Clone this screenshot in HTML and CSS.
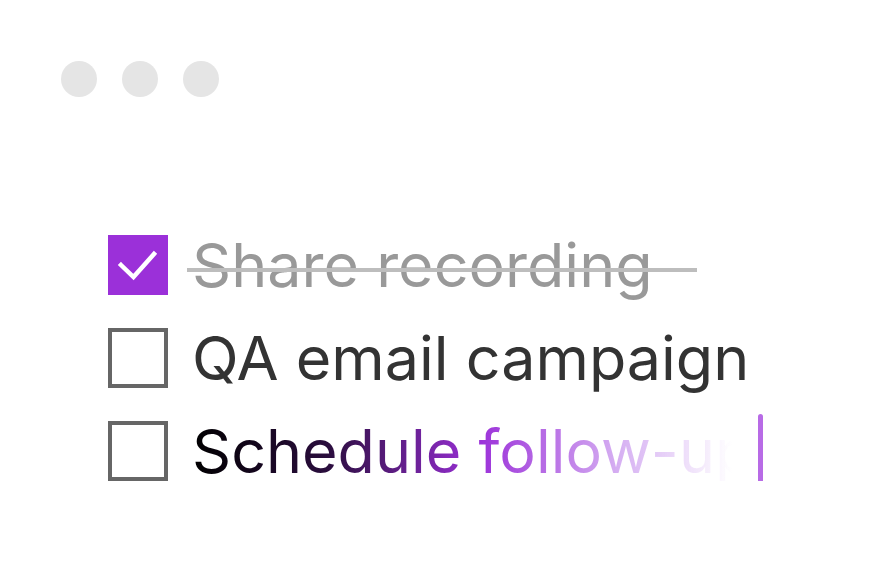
FILE: index.html
```html
<!DOCTYPE html>
<html>
<head>
<meta charset="utf-8">
<link rel="stylesheet" href="styles.css">
</head>
<body>
<div class="window">
  <div class="dots">
    <span class="dot"></span>
    <span class="dot"></span>
    <span class="dot"></span>
  </div>
  <ul class="tasks">
    <li class="task done">
      <span class="box checked">
        <svg viewBox="0 0 60 60" width="60" height="60"><path d="M13 30 L25.5 42 L46 19" fill="none" stroke="#fff" stroke-width="4.5" stroke-linecap="square"/></svg>
      </span>
      <span class="label">Share recording</span>
      <span class="strike"></span>
    </li>
    <li class="task">
      <span class="box"></span>
      <span class="label">QA email campaign</span>
    </li>
    <li class="task typing">
      <span class="box"></span>
      <span class="label fade">Schedule follow-up</span>
      <span class="cursor"></span>
    </li>
  </ul>
</div>
</body>
</html>
```
FILE: styles.css
```css
* { box-sizing: border-box; }
html, body {
  margin: 0;
  background: #fff;
}
body {
  font-family: Inter, Roboto, "Liberation Sans", sans-serif;
}
.window {
  padding: 61px 0 0 61px;
}
.dots {
  display: flex;
  gap: 25px;
}
.dot {
  width: 36px;
  height: 36px;
  border-radius: 50%;
  background: #e5e5e5;
}
.tasks {
  list-style: none;
  margin: 138px 0 0 47px;
  padding: 0;
  display: flex;
  flex-direction: column;
  gap: 33px;
}
.task {
  position: relative;
  display: flex;
  align-items: center;
  height: 60px;
  gap: 24px;
}
.box {
  flex: none;
  width: 60px;
  height: 60px;
  border: 4px solid #666;
  background: #fff;
}
.box.checked {
  border: none;
  background: #9b30d9;
}
.box svg { display: block; }
.label {
  font-size: 61px;
  line-height: 60px;
  color: #333;
  white-space: nowrap;
}
.done .label { color: #999; }
.strike {
  position: absolute;
  left: 79px;
  top: 33px;
  width: 510px;
  height: 4px;
  background: #bdbdbd;
}
.fade {
  width: 540px;
  overflow: hidden;
  background: linear-gradient(90deg, #000 0%, #2a0d3d 25%, #9b30d9 53%, rgba(190,130,235,0.6) 80%, rgba(255,255,255,0) 100%);
  -webkit-background-clip: text;
  background-clip: text;
  color: transparent;
}
.cursor {
  flex: none;
  width: 5px;
  height: 75px;
  border-radius: 3px;
  background: #b86be6;
  margin-left: 2px;
}
```
